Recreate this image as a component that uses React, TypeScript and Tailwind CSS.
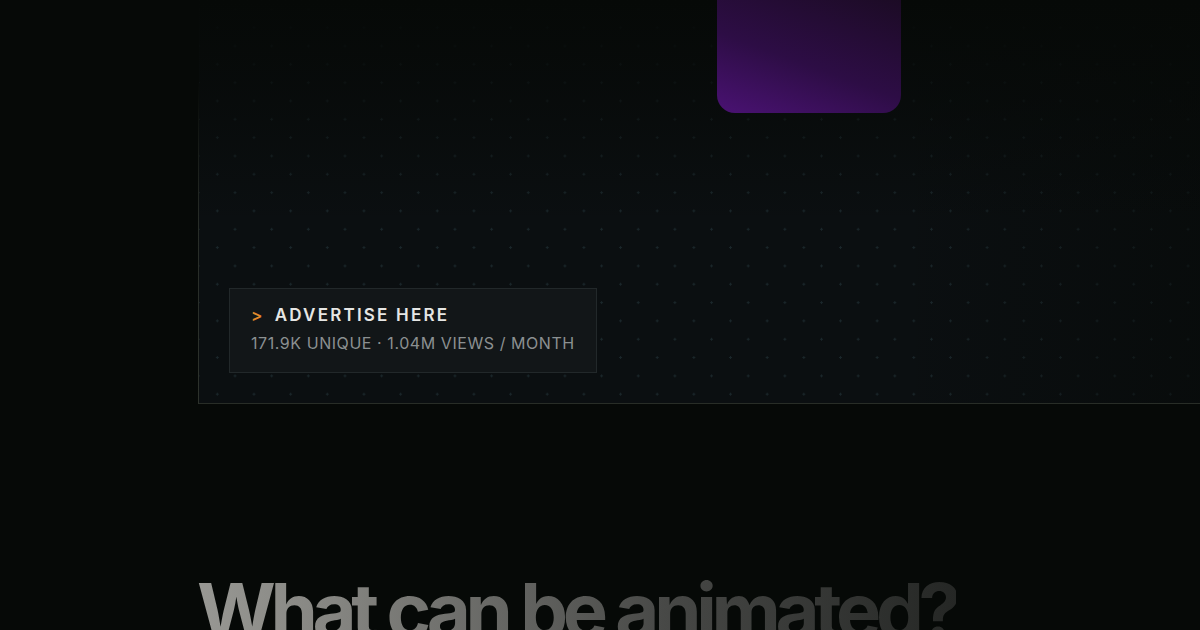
import React from 'react';

const App: React.FC = () => {
  return (
    <div className="w-[1200px] h-[630px] overflow-hidden bg-[#060907] font-['Inter','Liberation_Sans',sans-serif]">
      <div className="pl-[198px]">
        <div className="flex h-[404px]">
          {/* left edge of the panel, fading in from the top */}
          <div className="w-px bg-[linear-gradient(to_bottom,rgba(40,45,41,0)_0%,rgba(40,45,41,0)_20%,#272c27_55%,#2d322c_100%)]" />
          <div className="flex-1 flex flex-col border-b border-[#282d27] [background:linear-gradient(to_bottom,#060907_0%,rgba(6,9,7,0.6)_25%,rgba(6,9,7,0)_55%),linear-gradient(to_right,rgba(6,9,7,0)_70%,rgba(6,9,7,0.55)_100%),radial-gradient(circle,#1a262a_1px,transparent_1.4px)_0px_9.3px/36.67px_36.67px,radial-gradient(circle,#1a262a_1px,transparent_1.4px)_17.7px_27.7px/36.67px_36.67px,#0b0f11]">
            <div className="ml-[518px] w-[184px] h-[113px] rounded-b-[18px] bg-[linear-gradient(200deg,#1c0b25_0%,#2d0d45_55%,#4a1273_100%)]" />
            <div className="mt-auto ml-[30px] mb-[30px] w-[368px] h-[85px] border border-[#22282a] bg-[#121618] pl-[21px] pt-[16px]">
              <div className="flex items-center text-[17px] font-semibold leading-[20px] tracking-[0.13em] text-[#e6e6e4]">
                <span className="text-[#e28a2b] mr-[10px]">&gt;</span>
                <span>ADVERTISE HERE</span>
              </div>
              <div className="mt-[8px] text-[16px] leading-[20px] tracking-[0.035em] text-[#8b9091]">
                171.9K UNIQUE · 1.04M VIEWS / MONTH
              </div>
            </div>
          </div>
        </div>
      </div>
      <h2 className="mt-[168px] pl-[197px] text-[76px] leading-none font-bold tracking-[-0.07em] w-max bg-[linear-gradient(to_right,#b3b3ae_0%,#858581_35%,#474846_70%,#252725_100%)] bg-clip-text text-transparent">
        What can be animated?
      </h2>
    </div>
  );
};

export default App;
